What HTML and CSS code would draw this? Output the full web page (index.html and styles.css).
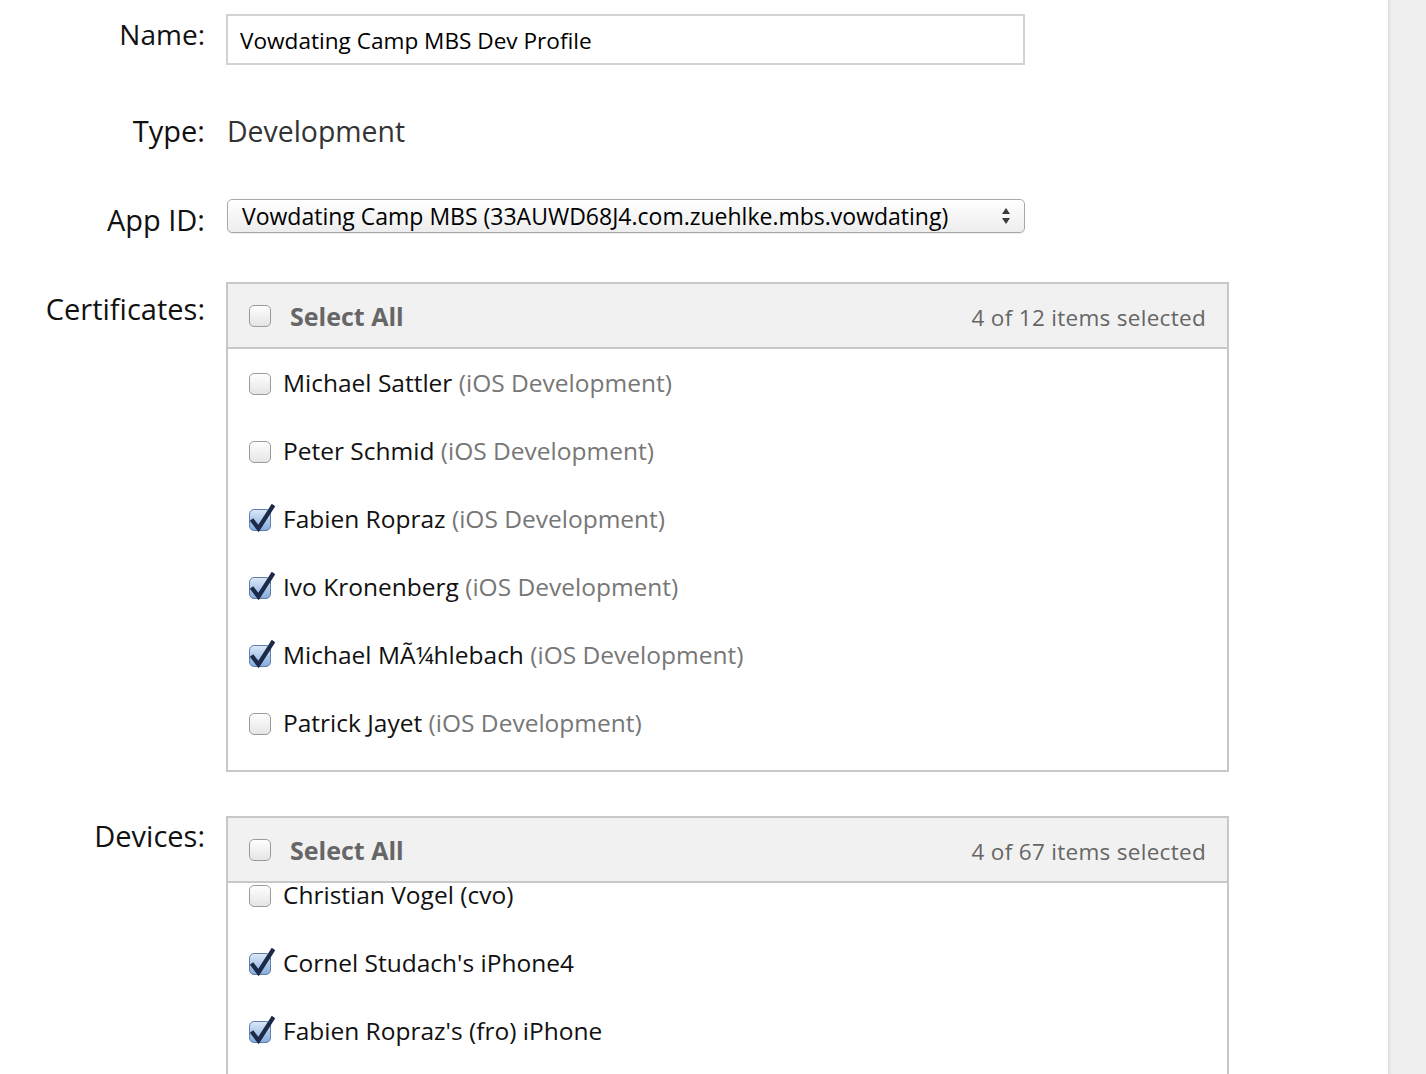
FILE: index.html
```html
<!DOCTYPE html>
<html>
<head>
<meta charset="utf-8">
<title>Profile</title>
<link rel="stylesheet" href="styles.css">
</head>
<body>
<svg width="0" height="0" class="defs">
  <defs>
    <linearGradient id="gOff" x1="0" y1="0" x2="0" y2="1">
      <stop offset="0" stop-color="#ffffff"/>
      <stop offset="1" stop-color="#e4e4e4"/>
    </linearGradient>
    <linearGradient id="gOn" x1="0" y1="0" x2="0" y2="1">
      <stop offset="0" stop-color="#dbe8f8"/>
      <stop offset="1" stop-color="#86abdc"/>
    </linearGradient>
    <symbol id="cbOff" viewBox="0 0 22 22">
      <rect x="0.5" y="0.5" width="21" height="21" rx="4.5" fill="url(#gOff)" stroke="#9a9a9a"/>
    </symbol>
  </defs>
</svg>
<div class="page">
  <main class="form">
    <div class="row row-name">
      <div class="label">Name:</div>
      <div class="field">
        <div class="input">Vowdating Camp MBS Dev Profile</div>
      </div>
    </div>

    <div class="row row-type">
      <div class="label">Type:</div>
      <div class="field type-value">Development</div>
    </div>

    <div class="row row-app">
      <div class="label">App ID:</div>
      <div class="field">
        <div class="select">
          <span class="select-text">Vowdating Camp MBS (33AUWD68J4.com.zuehlke.mbs.vowdating)</span>
          <svg class="arrows" width="10" height="18" viewBox="0 0 10 18"><path d="M5 1 L9 7 L1 7 Z M1 11 L9 11 L5 17 Z" fill="#3a3a3a"/></svg>
        </div>
      </div>
    </div>

    <div class="row row-certs">
      <div class="label">Certificates:</div>
      <div class="field">
        <div class="box certs">
          <div class="box-head">
            <svg class="cb" width="22" height="22"><use href="#cbOff"/></svg>
            <span class="select-all">Select All</span>
            <span class="count">4 of 12 items selected</span>
          </div>
          <div class="box-body">
            <div class="list">
              <div class="item"><svg class="cb" width="22" height="22"><use href="#cbOff"/></svg><span class="text"><span class="name">Michael Sattler</span> <span class="kind">(iOS Development)</span></span></div>
              <div class="item"><svg class="cb" width="22" height="22"><use href="#cbOff"/></svg><span class="text"><span class="name">Peter Schmid</span> <span class="kind">(iOS Development)</span></span></div>
              <div class="item"><svg class="cb" width="22" height="22" viewBox="0 0 22 22" overflow="visible"><rect x="0.5" y="0.5" width="21" height="21" rx="4.5" fill="url(#gOn)" stroke="#5f7ea8"/><path d="M2.5 10.5 L9.5 19.5 L24.5 -4" fill="none" stroke="#1b2a48" stroke-width="4.2" stroke-linejoin="miter"/></svg><span class="text"><span class="name">Fabien Ropraz</span> <span class="kind">(iOS Development)</span></span></div>
              <div class="item"><svg class="cb" width="22" height="22" viewBox="0 0 22 22" overflow="visible"><rect x="0.5" y="0.5" width="21" height="21" rx="4.5" fill="url(#gOn)" stroke="#5f7ea8"/><path d="M2.5 10.5 L9.5 19.5 L24.5 -4" fill="none" stroke="#1b2a48" stroke-width="4.2" stroke-linejoin="miter"/></svg><span class="text"><span class="name">Ivo Kronenberg</span> <span class="kind">(iOS Development)</span></span></div>
              <div class="item"><svg class="cb" width="22" height="22" viewBox="0 0 22 22" overflow="visible"><rect x="0.5" y="0.5" width="21" height="21" rx="4.5" fill="url(#gOn)" stroke="#5f7ea8"/><path d="M2.5 10.5 L9.5 19.5 L24.5 -4" fill="none" stroke="#1b2a48" stroke-width="4.2" stroke-linejoin="miter"/></svg><span class="text"><span class="name">Michael MÃ¼hlebach</span> <span class="kind">(iOS Development)</span></span></div>
              <div class="item"><svg class="cb" width="22" height="22"><use href="#cbOff"/></svg><span class="text"><span class="name">Patrick Jayet</span> <span class="kind">(iOS Development)</span></span></div>
            </div>
          </div>
        </div>
      </div>
    </div>

    <div class="row row-devices">
      <div class="label">Devices:</div>
      <div class="field">
        <div class="box devices">
          <div class="box-head">
            <svg class="cb" width="22" height="22"><use href="#cbOff"/></svg>
            <span class="select-all">Select All</span>
            <span class="count">4 of 67 items selected</span>
          </div>
          <div class="box-body scrolled">
            <div class="list">
              <div class="item"><svg class="cb" width="22" height="22"><use href="#cbOff"/></svg><span class="text"><span class="name">Christian Vogel (cvo)</span></span></div>
              <div class="item"><svg class="cb" width="22" height="22" viewBox="0 0 22 22" overflow="visible"><rect x="0.5" y="0.5" width="21" height="21" rx="4.5" fill="url(#gOn)" stroke="#5f7ea8"/><path d="M2.5 10.5 L9.5 19.5 L24.5 -4" fill="none" stroke="#1b2a48" stroke-width="4.2" stroke-linejoin="miter"/></svg><span class="text"><span class="name">Cornel Studach's iPhone4</span></span></div>
              <div class="item"><svg class="cb" width="22" height="22" viewBox="0 0 22 22" overflow="visible"><rect x="0.5" y="0.5" width="21" height="21" rx="4.5" fill="url(#gOn)" stroke="#5f7ea8"/><path d="M2.5 10.5 L9.5 19.5 L24.5 -4" fill="none" stroke="#1b2a48" stroke-width="4.2" stroke-linejoin="miter"/></svg><span class="text"><span class="name">Fabien Ropraz's (fro) iPhone</span></span></div>
            </div>
          </div>
        </div>
      </div>
    </div>
  </main>
  <aside class="side"></aside>
</div>
</body>
</html>
```

FILE: styles.css
```css
html, body {
  margin: 0;
  padding: 0;
  height: 100%;
  overflow: hidden;
  background: #ffffff;
}

body {
  font-family: "Open Sans", "DejaVu Sans", sans-serif;
  color: #111111;
}

.defs {
  position: absolute;
  width: 0;
  height: 0;
}

.page {
  display: flex;
  height: 1074px;
  overflow: hidden;
}

.form {
  flex: 1;
  display: flex;
  flex-direction: column;
  padding-top: 14px;
}

.side {
  width: 38px;
  flex: none;
  background: linear-gradient(to right, #d9d9d9 0, #e9e9e9 2px, #efefef 4px, #f0f0f0 100%);
}

.row {
  display: flex;
  align-items: flex-start;
}

.label {
  width: 205px;
  flex: none;
  text-align: right;
  font-size: 29px;
  line-height: 36px;
  color: #111111;
}

.field {
  margin-left: 21px;
}

/* Name */
.row-name .label {
  padding-top: 2px;
  font-size: 28px;
}

.input {
  width: 795px;
  height: 47px;
  border: 2px solid #d3d3d3;
  box-sizing: content-box;
  font-size: 22.6px;
  line-height: 49px;
  text-indent: 12px;
  color: #000000;
  background: #ffffff;
  white-space: nowrap;
}

/* Type */
.row-type {
  margin-top: 48px;
}

.type-value {
  margin-left: 22px;
  font-size: 28.4px;
  line-height: 36px;
  color: #333333;
}

/* App ID */
.row-app {
  margin-top: 50px;
}

.row-app .label {
  padding-top: 3px;
}

.row-app .field {
  margin-left: 22px;
}

.select {
  width: 798px;
  height: 34px;
  box-sizing: border-box;
  border: 1px solid #a8a8a8;
  border-radius: 5px;
  background: linear-gradient(#ffffff, #ededed);
  display: flex;
  align-items: center;
  justify-content: space-between;
  padding: 0 13px 0 14px;
  box-shadow: 0 1px 1px rgba(0,0,0,0.08);
}

.select-text {
  font-size: 23px;
  line-height: 32px;
  color: #000000;
  white-space: nowrap;
}

.arrows {
  margin-left: 10px;
  flex: none;
}

/* Boxes */
.row-certs {
  margin-top: 44px;
}

.row-certs .label {
  padding-top: 9px;
}

.row-devices {
  margin-top: 44px;
}

.row-devices .label {
  padding-top: 2px;
}

.box {
  width: 999px;
  border: 2px solid #c8c8c8;
  background: #ffffff;
}

.box-head {
  height: 63px;
  background: #f1f1f1;
  border-bottom: 2px solid #c8c8c8;
  display: flex;
  align-items: center;
  padding: 0 21px;
  position: relative;
  z-index: 1;
}

.cb {
  flex: none;
  display: block;
}

.select-all {
  margin-left: 19px;
  font-size: 25px;
  font-weight: 700;
  color: #666666;
}

.count {
  margin-left: auto;
  margin-top: 3px;
  font-size: 22.5px;
  color: #666666;
  letter-spacing: 0.3px;
}

.box-body {
  overflow: hidden;
}

.certs .box-body {
  padding-bottom: 12px;
}

.list {
  display: flex;
  flex-direction: column;
  padding-top: 1px;
}

.scrolled .list {
  margin-top: -22px;
}

.devices .box-body {
  height: 300px;
}

.item {
  height: 68px;
  display: flex;
  align-items: center;
  padding-left: 21px;
  font-size: 24.5px;
}

.item .cb {
  margin-right: 12px;
}

.text {
  white-space: nowrap;
  margin-bottom: 3px;
}

.name {
  color: #111111;
}

.kind {
  color: #777777;
}
```
